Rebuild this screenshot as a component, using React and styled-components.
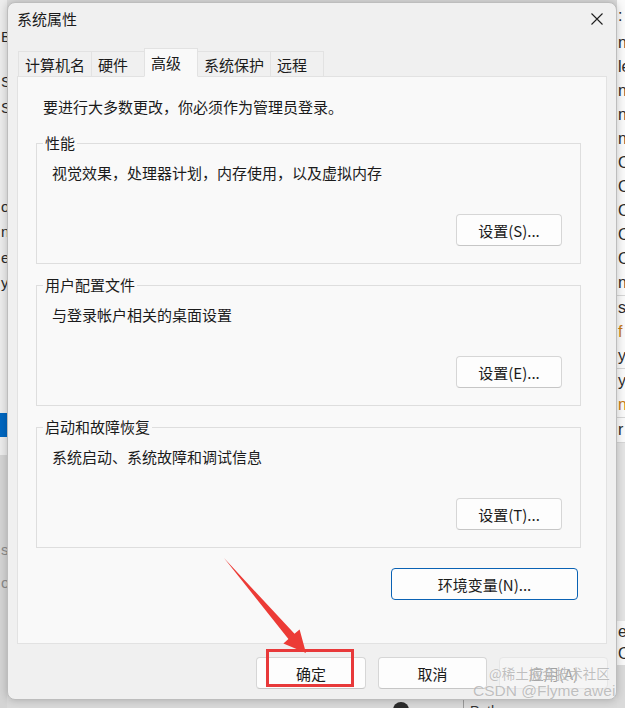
import React from "react";
import styled, { createGlobalStyle } from "styled-components";

const GlobalStyle = createGlobalStyle`
  html, body {
    margin: 0;
    padding: 0;
    background: #dcdcdc;
    overflow: hidden;
  }
  body {
    font-family: "Noto Sans CJK SC", "Noto Sans", sans-serif;
    color: #1b1b1b;
  }
`;

const Screen = styled.div`
  position: relative;
  width: 625px;
  height: 708px;
  display: grid;
  grid-template-columns: 7px 610px 8px;
  grid-template-rows: 700px 8px;
  overflow: hidden;
`;

/* the window lying behind the dialog, only its edges show */
const LeftStrip = styled.div`
  grid-column: 1;
  grid-row: 1 / 3;
  display: flex;
  flex-direction: column;
  overflow: hidden;
  background: linear-gradient(#ececec 0 455px, #d4d4d4 455px);
  font: 15px "Liberation Sans", sans-serif;
`;

const RightStrip = styled.div`
  grid-column: 3;
  grid-row: 1 / 3;
  display: flex;
  flex-direction: column;
  overflow: hidden;
  background: #fafafa;
  font: 16px "Liberation Sans", sans-serif;
`;

const Cell = styled.div`
  flex: none;
  height: ${({ $h }) => $h}px;
  line-height: ${({ $h }) => $h}px;
  padding-left: 1px;
  white-space: nowrap;
  color: ${({ $c }) => $c || "#2a2a2a"};
  background: ${({ $bg }) => $bg || "transparent"};
  border-bottom: ${({ $line }) => ($line ? "1px solid #d6d6d6" : "none")};
`;

const BottomStrip = styled.div`
  grid-column: 2;
  grid-row: 2;
  display: flex;
  align-items: flex-start;
  padding-left: 386px;
  background: #d9d9d9;
  overflow: hidden;
`;

const Knob = styled.div`
  width: 16px;
  height: 16px;
  margin-top: 2px;
  border-radius: 50%;
  background: #2b2b2b;
`;

const PathCol = styled.div`
  margin-left: 54px;
  padding-left: 6px;
  height: 8px;
  border-left: 1px solid #9a9a9a;
  font: 14px "Liberation Sans", sans-serif;
  line-height: 22px;
  color: #333;
`;

const Dialog = styled.div`
  grid-column: 2;
  grid-row: 1;
  position: relative;
  z-index: 1;
  margin-top: 2px;
  height: 698px;
  box-sizing: border-box;
  display: flex;
  flex-direction: column;
  background: #f0f0f0;
  border: 1px solid #bdbdbd;
  border-radius: 8px;
  box-shadow: 0 0 8px rgba(0, 0, 0, 0.22);
`;

const TitleBar = styled.div`
  height: 31px;
  display: flex;
  align-items: center;
  justify-content: space-between;
  padding: 0 13px 0 9px;
`;

const Title = styled.span`
  font-size: 15px;
  line-height: 20px;
`;

const TabRow = styled.div`
  height: 42px;
  display: flex;
  align-items: flex-end;
  padding-left: 10px;
  position: relative;
  z-index: 1;
`;

const Tab = styled.div`
  box-sizing: border-box;
  min-width: 54px;
  height: ${({ $active }) => ($active ? "29px" : "25px")};
  margin-bottom: ${({ $active }) => ($active ? "-1px" : "0")};
  padding: 0 6px;
  display: flex;
  align-items: center;
  font-size: 15px;
  background: ${({ $active }) => ($active ? "#f9f9f9" : "#f0f0f0")};
  border: 1px solid #e2e2e2;
  border-bottom: ${({ $active }) => ($active ? "1px solid #f9f9f9" : "none")};

  & + & {
    margin-left: -1px;
  }
`;

const Panel = styled.div`
  margin: 0 9px;
  height: 568px;
  box-sizing: border-box;
  display: flex;
  flex-direction: column;
  padding: 20px 25px 0 18px;
  background: #f9f9f9;
  border: 1px solid #e2e2e2;
`;

const Notice = styled.div`
  margin-left: 7px;
  font-size: 15px;
  line-height: 20px;
`;

const Group = styled.fieldset`
  margin: ${({ $first }) => ($first ? "16px" : "11px")} 0 0;
  padding: 0;
  min-width: 0;
  border: 1px solid #dedede;
`;

const Legend = styled.legend`
  margin-left: 6px;
  padding: 0 2px;
  font-size: 15px;
  line-height: 20px;
`;

const GroupBody = styled.div`
  display: flex;
  flex-direction: column;
  padding: 10px 18px 17px 15px;
`;

const Desc = styled.div`
  font-size: 15px;
  line-height: 20px;
`;

const ButtonRow = styled.div`
  display: flex;
  justify-content: flex-end;
  margin-top: ${({ $top }) => $top}px;
  padding-right: ${({ $right }) => $right || 0}px;
`;

const Button = styled.button`
  box-sizing: border-box;
  width: ${({ $w }) => $w}px;
  height: 32px;
  padding: 0;
  font-family: "Noto Sans CJK SC", "Noto Sans", sans-serif;
  font-size: 15px;
  color: ${({ disabled }) => (disabled ? "#a0a0a0" : "#1b1b1b")};
  background: ${({ disabled }) => (disabled ? "#f5f5f5" : "#fdfdfd")};
  border: 1px solid
    ${({ disabled, $focus }) => ($focus ? "#0a62b4" : disabled ? "#e6e6e6" : "#d6d6d6")};
  border-bottom-color: ${({ disabled, $focus }) =>
    $focus ? "#0a62b4" : disabled ? "#e6e6e6" : "#c6c6c6"};
  border-radius: 4px;
  cursor: default;
`;

const Footer = styled.div`
  flex: 1;
  display: flex;
  justify-content: flex-end;
  align-items: flex-start;
  gap: 12px;
  padding: 13px 8px 0 0;
`;

const RedBox = styled.div`
  position: absolute;
  left: 258px;
  top: 646px;
  width: 88px;
  height: 38px;
  box-sizing: border-box;
  border: 3px solid #e8393a;
  pointer-events: none;
`;

const ArrowLayer = styled.svg`
  position: absolute;
  left: 0;
  top: 0;
  pointer-events: none;
`;

const Watermark = styled.div`
  position: absolute;
  z-index: 2;
  left: ${({ $x }) => $x}px;
  top: ${({ $y }) => $y}px;
  font-family: ${({ $latin }) =>
    $latin ? '"Liberation Sans", sans-serif' : '"Noto Sans CJK SC", sans-serif'};
  font-size: ${({ $size }) => $size}px;
  line-height: 1;
  white-space: nowrap;
  color: rgba(130, 130, 130, 0.5);
  text-shadow: 0 0 1px rgba(255, 255, 255, 0.85);
  pointer-events: none;
`;

const leftCells = [
  { h: 27, t: "" },
  { h: 20, t: "B." },
  { h: 25, t: "" },
  { h: 20, t: "S" },
  { h: 6, t: "" },
  { h: 20, t: "S" },
  { h: 79, t: "" },
  { h: 20, t: "o" },
  { h: 5, t: "" },
  { h: 20, t: "n" },
  { h: 6, t: "" },
  { h: 20, t: "e" },
  { h: 5, t: "" },
  { h: 20, t: "y" },
  { h: 120, t: "" },
  { h: 24, t: "", bg: "#0067c0" },
  { h: 103, t: "" },
  { h: 20, t: "s", c: "#8a8a8a" },
  { h: 13, t: "" },
  { h: 20, t: "o", c: "#8a8a8a" },
];

const rightCells = [
  { h: 31, t: ":" },
  { h: 24, t: "n" },
  { h: 24, t: "le" },
  { h: 24, t: "n" },
  { h: 24, t: "n" },
  { h: 24, t: "n" },
  { h: 24, t: "O" },
  { h: 24, t: "O" },
  { h: 24, t: "O" },
  { h: 24, t: "O" },
  { h: 24, t: "O" },
  { h: 24, t: "n", line: true },
  { h: 24, t: "s" },
  { h: 24, t: "f", c: "#c77a14" },
  { h: 24, t: "y", line: true },
  { h: 24, t: "y" },
  { h: 24, t: "n", c: "#c77a14", line: true },
  { h: 24, t: "r", line: true },
  { h: 178, t: "", bg: "#e4e4e4" },
  { h: 22, t: "e" },
  { h: 22, t: "O" },
  { h: 60, t: "", bg: "#dadada" },
];

const tabs = ["计算机名", "硬件", "高级", "系统保护", "远程"];

const groups = [
  { title: "性能", desc: "视觉效果，处理器计划，内存使用，以及虚拟内存", button: "设置(S)..." },
  { title: "用户配置文件", desc: "与登录帐户相关的桌面设置", button: "设置(E)..." },
  { title: "启动和故障恢复", desc: "系统启动、系统故障和调试信息", button: "设置(T)..." },
];

function CloseIcon() {
  return (
    <svg width="12" height="12" viewBox="0 0 12 12">
      <path d="M0.5 0.5 L11.5 11.5 M11.5 0.5 L0.5 11.5" stroke="#1f1f1f" strokeWidth="1.1" fill="none" />
    </svg>
  );
}

function Arrow() {
  // coordinates are the page minus the dialog's origin (8, 3)
  return (
    <ArrowLayer width="608" height="695" viewBox="0 0 608 695">
      <polygon
        points="216,555 286.5,630.8 291.6,626.4 298,650 275.4,640.4 280.4,636"
        fill="#ec3b36"
      />
    </ArrowLayer>
  );
}

export default function App() {
  return (
    <>
      <GlobalStyle />
      <Screen>
        <LeftStrip>
          {leftCells.map((c, i) => (
            <Cell key={i} $h={c.h} $bg={c.bg} $c={c.c}>
              {c.t}
            </Cell>
          ))}
        </LeftStrip>

        <Dialog>
          <TitleBar>
            <Title>系统属性</Title>
            <CloseIcon />
          </TitleBar>

          <TabRow>
            {tabs.map((t) => (
              <Tab key={t} $active={t === "高级"}>
                {t}
              </Tab>
            ))}
          </TabRow>

          <Panel>
            <Notice>要进行大多数更改，你必须作为管理员登录。</Notice>
            {groups.map((g, i) => (
              <Group key={g.title} $first={i === 0}>
                <Legend>{g.title}</Legend>
                <GroupBody>
                  <Desc>{g.desc}</Desc>
                  <ButtonRow $top={31}>
                    <Button $w={106}>{g.button}</Button>
                  </ButtonRow>
                </GroupBody>
              </Group>
            ))}
            <ButtonRow $top={20} $right={3}>
              <Button $w={187} $focus>
                环境变量(N)...
              </Button>
            </ButtonRow>
          </Panel>

          <Footer>
            <Button $w={110}>确定</Button>
            <Button $w={109}>取消</Button>
            <Button $w={109} disabled>
              应用(A)
            </Button>
          </Footer>

          <RedBox />
          <Arrow />
        </Dialog>

        <RightStrip>
          {rightCells.map((c, i) => (
            <Cell key={i} $h={c.h} $bg={c.bg} $c={c.c} $line={c.line}>
              {c.t}
            </Cell>
          ))}
        </RightStrip>

        <BottomStrip>
          <Knob />
          <PathCol>Path</PathCol>
        </BottomStrip>

        <Watermark $x={489} $y={667} $size={13.5}>
          @稀土掘金技术社区
        </Watermark>
        <Watermark $x={473} $y={683} $size={15.5} $latin>
          CSDN @Flyme awei
        </Watermark>
      </Screen>
    </>
  );
}
